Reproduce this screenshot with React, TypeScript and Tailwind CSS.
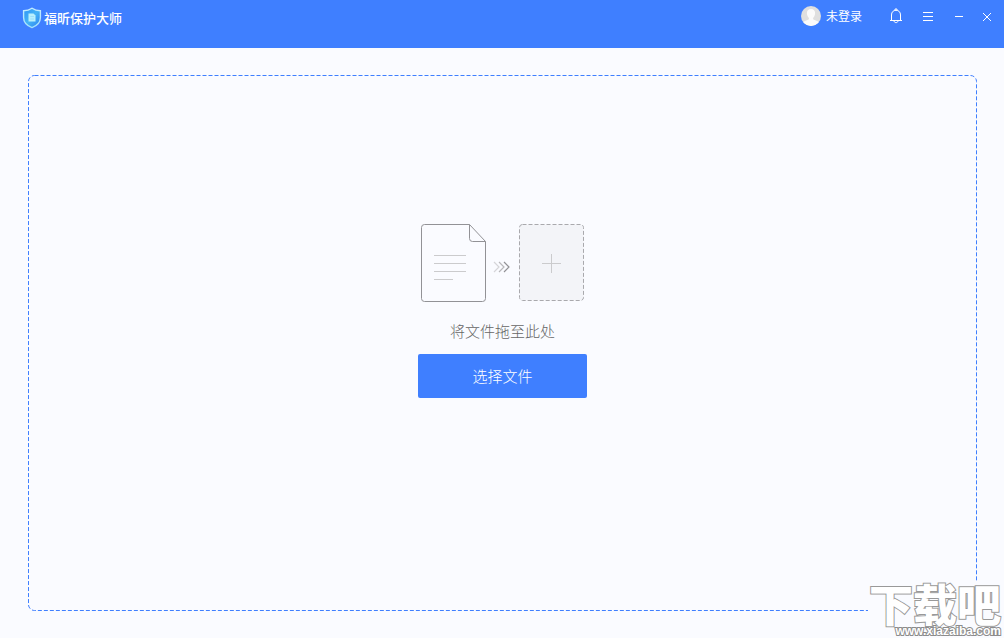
function Logo() {
  return (
    <svg width="20" height="22" viewBox="0 0 20 22" aria-hidden="true">
      <defs>
        <linearGradient id="shield" x1="0" y1="0" x2="1" y2="1">
          <stop offset="0" stopColor="#2e93f6" />
          <stop offset="0.5" stopColor="#45b4f6" />
          <stop offset="1" stopColor="#2a7df0" />
        </linearGradient>
        <linearGradient id="rim" x1="0" y1="0" x2="0" y2="1">
          <stop offset="0" stopColor="#c4ecff" />
          <stop offset="1" stopColor="#a2e0fb" />
        </linearGradient>
      </defs>
      <path
        d="M10 1.2C7.6 2.9 4.6 3.7 1.6 3.7V10.500C1.600 15.500 5.200 18.800 10 20.600C14.800 18.800 18.400 15.500 18.400 10.500V3.700C15.400 3.700 12.400 2.900 10 1.200Z"
        fill="url(#shield)"
        stroke="url(#rim)"
        strokeWidth="1.4"
      />
      <path d="M6.500 6.500H11.500L13.500 8.500V14.500H6.500Z" fill="#b9effd" />
      <path d="M8.300 9.500H12M8.300 12H12" stroke="#93dcfa" strokeWidth="0.8" />
    </svg>
  );
}

function Avatar() {
  return (
    <svg width="20" height="20" viewBox="0 0 20 20" aria-hidden="true">
      <defs>
        <clipPath id="disc">
          <circle cx="10" cy="10" r="10" />
        </clipPath>
      </defs>
      <g clipPath="url(#disc)">
        <rect width="20" height="20" fill="#dfdfdf" />
        <path
          d="M10 3C7.300 3 5.800 4.800 5.900 7.300C6 9.600 6.800 11 7.900 12V13.300C6.500 14.500 3 14.700 1.500 17V20H18.500V17C17 14.700 13.500 14.500 12.100 13.300V12C13.200 11 14 9.600 14.100 7.300C14.200 4.800 12.700 3 10 3Z"
          fill="#fbfbfb"
        />
      </g>
    </svg>
  );
}

function TitleBar() {
  return (
    <header className="flex h-12 items-start justify-between bg-[#3f7fff] pl-[22px] pr-[7px] text-white">
      <div className="flex items-center pt-[7px]">
        <Logo />
        <h1 className="pl-[2px] text-[13px] leading-[22px] font-medium">福昕保护大师</h1>
      </div>
      <div className="flex h-8 items-center">
        <button type="button" className="flex items-center gap-[5px] text-[12px] leading-5">
          <Avatar />
          未登录
        </button>
        <button type="button" aria-label="通知" className="ml-6 flex h-8 w-5 items-center justify-center">
          <svg width="14" height="16" viewBox="0 0 14 16" fill="none" stroke="currentColor" aria-hidden="true">
            <path d="M1 12.500H13M2.500 12.500V7C2.500 4 4.300 2.300 7 2.300S11.500 4 11.500 7V12.500M6 2.200V1H8V2.200M5 13C5.300 14.300 6 14.600 7 14.600S8.700 14.300 9 13" />
          </svg>
        </button>
        <button type="button" aria-label="菜单" className="ml-3 flex h-8 w-5 items-center justify-center">
          <svg width="10" height="9" viewBox="0 0 10 9" stroke="currentColor" aria-hidden="true">
            <path d="M0 0.500H10M0 4.500H10M0 8.500H10" />
          </svg>
        </button>
        <button type="button" aria-label="最小化" className="ml-[11px] flex h-8 w-5 items-center justify-center">
          <svg width="8" height="9" viewBox="0 0 8 9" stroke="currentColor" aria-hidden="true">
            <path d="M0 4.500H8" />
          </svg>
        </button>
        <button type="button" aria-label="关闭" className="ml-2 flex h-8 w-5 items-center justify-center">
          <svg width="10" height="10" viewBox="0 0 10 10" stroke="currentColor" aria-hidden="true">
            <path d="M1 2L9 10M9 2L1 10" />
          </svg>
        </button>
      </div>
    </header>
  );
}

function DropArt() {
  return (
    <svg width="165" height="80" viewBox="0 0 165 80" fill="none" aria-hidden="true">
      <path
        d="M49.500 1.500H4.500Q1.500 1.500 1.500 4.500V75.500Q1.500 78.500 4.500 78.500H62.500Q65.500 78.500 65.500 75.500V18.500ZM49.500 1.500V15.500Q49.500 18.500 52.500 18.500H65.500"
        stroke="#929296"
      />
      <path d="M14 32.500H46M14 40.500H46M14 48.500H46M14 56.500H33" stroke="#cbcbcd" />
      <path d="M74 39L79 44L74 49" stroke="#d5d5d8" strokeWidth="1.2" />
      <path d="M79 39L84 44L79 49" stroke="#b8b8bb" strokeWidth="1.2" />
      <path d="M84 39L89 44L84 49" stroke="#929296" strokeWidth="1.2" />
      <rect x="99.500" y="1.500" width="64" height="76" rx="3" fill="#f3f4f8" stroke="#a9a9ad" strokeDasharray="4 2" />
      <path d="M122 40.500H141M131.500 31V50" stroke="#cbcbcd" />
    </svg>
  );
}

function Watermark() {
  return (
    <div className="absolute right-0 bottom-0 flex w-[136px] flex-col items-end bg-[#fafbff] pr-[3px] text-white [paint-order:stroke_fill]">
      <span className="text-[44px] leading-[44px] font-black [-webkit-text-stroke:2px_#999999]">
        下载吧
      </span>
      <span className="font-['Liberation_Sans'] text-[12px] leading-[13px] font-bold [-webkit-text-stroke:2px_#8c8c8c]">
        www.xiazaiba.com
      </span>
    </div>
  );
}

export default function App() {
  return (
    <div className="relative flex min-h-screen flex-col bg-[#fafbff] font-['Noto_Sans_CJK_SC',sans-serif]">
      <TitleBar />
      <main className="flex grow flex-col py-[27px] pr-[27px] pl-7">
        <section className="relative flex grow flex-col items-center pt-[148px]">
          <svg className="pointer-events-none absolute inset-0 h-full w-full overflow-visible" aria-hidden="true">
            <rect
              x="0.500"
              y="0.500"
              rx="6"
              fill="none"
              stroke="#3f7fff"
              strokeDasharray="4 2"
              className="h-[calc(100%-1px)] w-[calc(100%-1px)]"
            />
          </svg>
          <DropArt />
          <p className="pt-4 text-[15px] leading-6 font-light text-[#666666]">将文件拖至此处</p>
          <button
            type="button"
            className="mt-[11px] h-11 w-[169px] rounded-[2px] bg-[#3f7fff] text-[15px] leading-6 font-light text-white"
          >
            选择文件
          </button>
        </section>
      </main>
      <Watermark />
    </div>
  );
}
